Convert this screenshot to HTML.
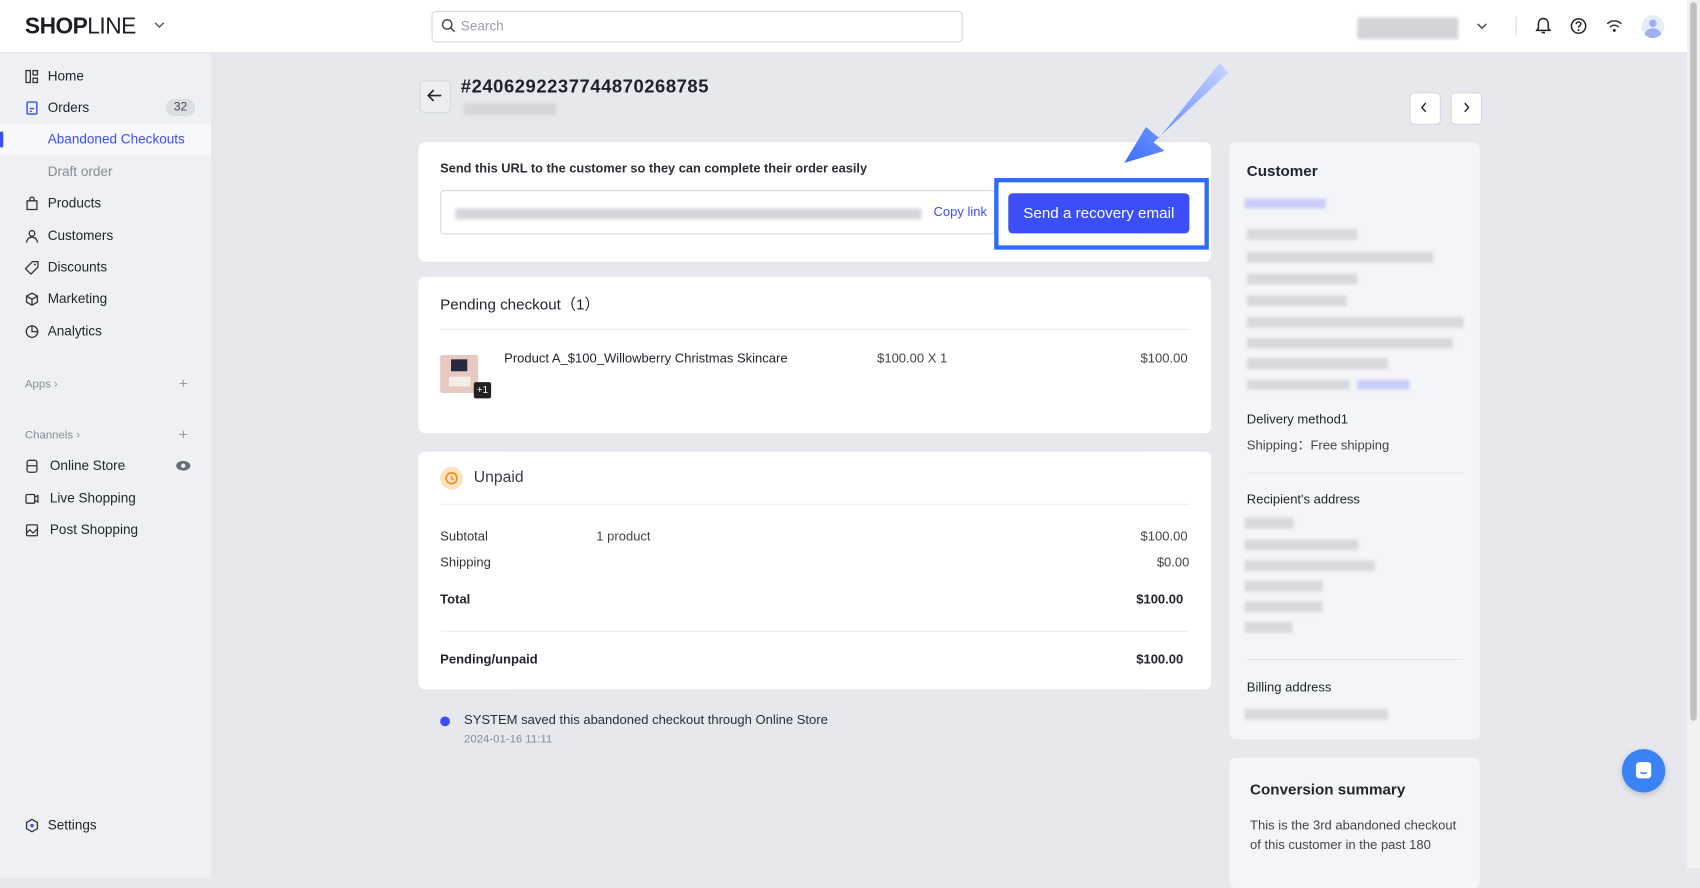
<!DOCTYPE html>
<html><head><meta charset="utf-8">
<style>
html,body{margin:0;padding:0;width:1700px;height:850px;overflow:hidden;background:#e6e8ee;}
#w{position:absolute;left:0;top:0;width:1568px;height:800px;transform:scale(1.08418,1.0856);transform-origin:0 0;font-family:"Liberation Sans",Arial,sans-serif;color:#23252e;background:#e6e8ee;}
.a{position:absolute;}
.t{position:absolute;white-space:nowrap;line-height:1;}
.card{position:absolute;background:#fff;border-radius:6px;}
.blur{position:absolute;background:#d7d8de;filter:blur(1.5px);}
.nav{position:absolute;left:44px;font-size:12.5px;color:#23252e;}
.ic{position:absolute;left:23px;width:13px;height:13px;}
</style></head><body><div id="w">
<div class="a" style="left:0;top:0;width:1556px;height:48px;background:#fff;border-bottom:1px solid #e3e4ea;"></div>
<div class="t" style="left:23px;top:14px;font-size:21px;font-weight:bold;letter-spacing:-0.5px;color:#1d1f27;">SHOP<span style="font-weight:normal">LINE</span></div>
<svg class="a" style="left:142px;top:19px" width="10" height="8"><path d="M1 2l4 4 4-4" stroke="#555" fill="none" stroke-width="1.3"/></svg>
<div class="a" style="left:398px;top:10px;width:488px;height:27px;border:1px solid #d3d5dc;border-radius:4px;background:#fff;"></div>
<svg class="a" style="left:407px;top:17px" width="13" height="13"><circle cx="5.5" cy="5.5" r="4.3" stroke="#444" fill="none" stroke-width="1.3"/><path d="M8.7 8.7l3.5 3.5" stroke="#444" stroke-width="1.4"/></svg>
<div class="t" style="left:425px;top:18px;font-size:12.5px;color:#9a9ca6;">Search</div>
<div class="blur" style="left:1252px;top:16px;width:93px;height:20px;background:#d2d3d8;"></div>
<svg class="a" style="left:1362px;top:20px" width="10" height="8"><path d="M1 2l4 4 4-4" stroke="#444" fill="none" stroke-width="1.3"/></svg>
<div class="a" style="left:1398px;top:15px;width:1px;height:18px;background:#dcdde2;"></div>
<svg class="a" style="left:1416px;top:15px" width="15" height="17"><path d="M7.5 2c-3 0-4.5 2.3-4.5 5v4L1.5 13h12L12 11V7c0-2.7-1.5-5-4.5-5zM6 15h3" stroke="#222" fill="none" stroke-width="1.4"/></svg>
<svg class="a" style="left:1448px;top:16px" width="16" height="16"><circle cx="8" cy="8" r="6.6" stroke="#222" fill="none" stroke-width="1.4"/><path d="M5.8 6.2c0-1.3 1-2 2.2-2s2.2.8 2.2 1.9c0 1.5-2.2 1.6-2.2 3.3" stroke="#222" fill="none" stroke-width="1.3"/><circle cx="8" cy="11.7" r=".9" fill="#222"/></svg>
<svg class="a" style="left:1481px;top:17px" width="16" height="14"><path d="M1.5 5a9 9 0 0 1 13 0M4 8a5.5 5.5 0 0 1 8 0" stroke="#333" fill="none" stroke-width="1.4"/><circle cx="8" cy="11" r="1.4" fill="#333"/></svg>
<div class="a" style="left:1514px;top:14px;width:21px;height:21px;border-radius:50%;background:#e6ebfb;overflow:hidden;"><div class="a" style="left:7px;top:4px;width:7px;height:7px;border-radius:50%;background:#9fb0f5;"></div><div class="a" style="left:3px;top:12px;width:15px;height:12px;border-radius:50%;background:#9fb0f5;"></div></div>
<div class="a" style="left:1556px;top:0;width:12px;height:800px;background:#f1f1f1;"></div>
<div class="a" style="left:1559px;top:2px;width:6px;height:662px;border-radius:3px;background:#c1c1c1;"></div>
<div class="a" style="left:0;top:49px;width:195px;height:760px;background:#eef0f4;border-right:1px solid #e0e2e8;"></div>
<div class="a" style="left:0;top:114px;width:195px;height:29px;background:#f7f8fb;"></div>
<div class="a" style="left:0;top:121px;width:3px;height:15px;background:#3b4ef8;border-radius:2px;"></div>
<svg class="ic" style="top:64px" viewBox="0 0 13 13"><rect x="1" y="1" width="4" height="11" stroke="#333" fill="none" stroke-width="1.2"/><rect x="7.5" y="1" width="4" height="4" stroke="#333" fill="none" stroke-width="1.2"/><rect x="7.5" y="8" width="4" height="4" stroke="#333" fill="none" stroke-width="1.2"/></svg>
<div class="t nav" style="top:64px">Home</div>
<svg class="ic" style="top:93px" viewBox="0 0 13 13"><rect x="2" y="1" width="9" height="11" rx="1" stroke="#3b4ef8" fill="none" stroke-width="1.3"/><path d="M4.5 7h4M4.5 9.5h2" stroke="#3b4ef8" stroke-width="1.2"/></svg>
<div class="t nav" style="top:93px">Orders</div>
<div class="a" style="left:153px;top:91px;width:27px;height:16px;border-radius:8px;background:#dcdee6;font-size:11px;line-height:16px;text-align:center;color:#444;">32</div>
<div class="t nav" style="top:122px;color:#3b4ef8">Abandoned Checkouts</div>
<div class="t nav" style="top:152px;color:#8a8c96">Draft order</div>
<svg class="ic" style="top:181px" viewBox="0 0 13 13"><path d="M2 4h9v8H2zM4.5 4V2.5a2 2 0 0 1 4 0V4" stroke="#333" fill="none" stroke-width="1.2"/></svg>
<div class="t nav" style="top:181px">Products</div>
<svg class="ic" style="top:211px" viewBox="0 0 13 13"><circle cx="6.5" cy="4" r="2.6" stroke="#333" fill="none" stroke-width="1.2"/><path d="M1.5 12.5a5 5 0 0 1 10 0" stroke="#333" fill="none" stroke-width="1.2"/></svg>
<div class="t nav" style="top:211px">Customers</div>
<svg class="ic" style="top:240px" viewBox="0 0 13 13"><path d="M7 1h5v5l-6.5 6.5-5-5z" stroke="#333" fill="none" stroke-width="1.2"/><circle cx="9.3" cy="3.7" r=".9" fill="#333"/></svg>
<div class="t nav" style="top:240px">Discounts</div>
<svg class="ic" style="top:269px" viewBox="0 0 13 13"><path d="M6.5 1l5 2.8v5.5l-5 2.8-5-2.8V3.8zM1.5 3.8l5 2.8 5-2.8M6.5 6.6v5.5" stroke="#333" fill="none" stroke-width="1.2"/></svg>
<div class="t nav" style="top:269px">Marketing</div>
<svg class="ic" style="top:299px" viewBox="0 0 13 13"><circle cx="6.5" cy="6.5" r="5.3" stroke="#333" fill="none" stroke-width="1.2"/><path d="M6.5 1.2v5.3h5.3" stroke="#333" fill="none" stroke-width="1.2"/></svg>
<div class="t nav" style="top:299px">Analytics</div>
<div class="t" style="left:23px;top:349px;font-size:10.5px;color:#8a8c96;">Apps ›</div>
<div class="t" style="left:165px;top:346px;font-size:14px;color:#999;">+</div>
<div class="t" style="left:23px;top:396px;font-size:10.5px;color:#8a8c96;">Channels ›</div>
<div class="t" style="left:165px;top:393px;font-size:14px;color:#999;">+</div>
<svg class="ic" style="top:423px" viewBox="0 0 13 13"><rect x="2" y="1" width="9" height="11" rx="2" stroke="#333" fill="none" stroke-width="1.2"/><path d="M2 6h9" stroke="#333" stroke-width="1.2"/></svg>
<div class="t nav" style="top:423px;left:46px">Online Store</div>
<svg class="a" style="left:162px;top:423px" width="14" height="12"><ellipse cx="7" cy="6" rx="6.5" ry="4.5" fill="#6a6d78"/><circle cx="7" cy="6" r="2" fill="#eef0f4"/></svg>
<svg class="ic" style="top:453px" viewBox="0 0 13 13"><rect x="1" y="2.5" width="8" height="8" rx="1" stroke="#333" fill="none" stroke-width="1.2"/><path d="M9 5l3-1.5v6L9 8" stroke="#333" fill="none" stroke-width="1.2"/></svg>
<div class="t nav" style="top:453px;left:46px">Live Shopping</div>
<svg class="ic" style="top:482px" viewBox="0 0 13 13"><rect x="1.5" y="1.5" width="10" height="10" rx="1" stroke="#333" fill="none" stroke-width="1.2"/><path d="M1.5 9l3-3 3 3 4-4" stroke="#333" fill="none" stroke-width="1.1"/></svg>
<div class="t nav" style="top:482px;left:46px">Post Shopping</div>
<svg class="ic" style="top:754px" viewBox="0 0 13 13"><path d="M6.5 .8l5 2.9v5.6l-5 2.9-5-2.9V3.7z" stroke="#333" fill="none" stroke-width="1.2"/><circle cx="6.5" cy="6.5" r="1.6" fill="#3b4ef8"/></svg>
<div class="t nav" style="top:754px">Settings</div>
<div class="a" style="left:387px;top:74px;width:27px;height:28px;border:1px solid #d5d7de;border-radius:4px;background:#eceef2;"></div>
<svg class="a" style="left:393px;top:81px" width="16" height="14"><path d="M14 7H2M7 2L2 7l5 5" stroke="#222" fill="none" stroke-width="1.5"/></svg>
<div class="t" style="left:425px;top:71px;font-size:17px;font-weight:bold;letter-spacing:0.5px;color:#1f2129;">#2406292237744870268785</div>
<div class="blur" style="left:428px;top:95px;width:85px;height:11px;background:#d4d5da;"></div>
<div class="a" style="left:1300px;top:85px;width:27px;height:28px;border:1px solid #d5d7de;border-radius:4px;background:#fff;"></div>
<div class="a" style="left:1338px;top:85px;width:27px;height:28px;border:1px solid #d5d7de;border-radius:4px;background:#fff;"></div>
<svg class="a" style="left:1309px;top:93px" width="10" height="12"><path d="M6 2L2.5 6 6 10" stroke="#222" fill="none" stroke-width="1.3"/></svg>
<svg class="a" style="left:1347px;top:93px" width="10" height="12"><path d="M4 2l3.5 4L4 10" stroke="#222" fill="none" stroke-width="1.3"/></svg>
<div class="card" style="left:386px;top:131px;width:731px;height:110px;"></div>
<div class="t" style="left:406px;top:150px;font-size:11.8px;font-weight:bold;color:#2b2d35;">Send this URL to the customer so they can complete their order easily</div>
<div class="a" style="left:406px;top:175px;width:510px;height:39px;border:1px solid #d5d7de;border-radius:4px;background:#fff;"></div>
<div class="blur" style="left:420px;top:192px;width:430px;height:10px;background:#d5d6db;"></div>
<div class="t" style="left:861px;top:189px;font-size:12px;color:#3b4ef8;">Copy link</div>
<div class="a" style="left:917px;top:164px;width:190px;height:58px;border:4px solid #2f6bff;"></div>
<div class="a" style="left:930px;top:178px;width:167px;height:37px;background:#3b4ef8;border-radius:4px;color:#fff;font-size:14px;line-height:37px;text-align:center;">Send a recovery email</div>
<svg class="a" style="left:1030px;top:55px" width="110" height="105"><defs><linearGradient id="g" x1="1" y1="0" x2="0" y2="1"><stop offset="0" stop-color="#c7d6ff"/><stop offset="1" stop-color="#3a6cff"/></linearGradient></defs><path d="M103 12L95 3 39 72 27 62 7 95 44 84 34 76z" fill="url(#g)"/></svg>
<div class="card" style="left:386px;top:255px;width:731px;height:144px;"></div>
<div class="t" style="left:406px;top:273px;font-size:14px;color:#23252e;">Pending checkout（1）</div>
<div class="a" style="left:406px;top:303px;width:691px;height:1px;background:#eceef2;"></div>
<div class="a" style="left:406px;top:327px;width:35px;height:35px;background:#e8c8bf;border-radius:2px;overflow:hidden;"><div class="a" style="left:10px;top:4px;width:15px;height:11px;background:#2a2740;"></div><div class="a" style="left:8px;top:20px;width:20px;height:9px;background:#f5ebe7;"></div></div>
<div class="a" style="left:437px;top:352px;width:16px;height:15px;background:#222;border-radius:2px;color:#fff;font-size:9px;line-height:15px;text-align:center;">+1</div>
<div class="t" style="left:465px;top:324px;font-size:12px;color:#23252e;">Product A_$100_Willowberry Christmas Skincare</div>
<div class="t" style="left:809px;top:324px;font-size:12px;color:#444;">$100.00 X 1</div>
<div class="t" style="left:1052px;top:324px;font-size:12px;color:#444;">$100.00</div>
<div class="card" style="left:386px;top:416px;width:731px;height:219px;"></div>
<div class="a" style="left:406px;top:430px;width:21px;height:21px;border-radius:50%;background:#fde3bf;"></div>
<svg class="a" style="left:409px;top:433px" width="15" height="15"><circle cx="7.5" cy="7.5" r="5" stroke="#f08c1c" fill="none" stroke-width="1.5"/><path d="M7.5 5v3l2 1" stroke="#f08c1c" fill="none" stroke-width="1.3"/></svg>
<div class="t" style="left:437px;top:433px;font-size:14.5px;color:#3a3c45;">Unpaid</div>
<div class="a" style="left:406px;top:464px;width:691px;height:1px;background:#eceef2;"></div>
<div class="t" style="left:406px;top:488px;font-size:12px;color:#333;">Subtotal</div>
<div class="t" style="left:550px;top:488px;font-size:12px;color:#444;">1 product</div>
<div class="t" style="left:1052px;top:488px;font-size:12px;color:#444;">$100.00</div>
<div class="t" style="left:406px;top:512px;font-size:12px;color:#333;">Shipping</div>
<div class="t" style="left:1067px;top:512px;font-size:12px;color:#444;">$0.00</div>
<div class="t" style="left:406px;top:546px;font-size:12px;font-weight:bold;">Total</div>
<div class="t" style="left:1048px;top:546px;font-size:12px;font-weight:bold;">$100.00</div>
<div class="a" style="left:406px;top:581px;width:691px;height:1px;background:#eceef2;"></div>
<div class="t" style="left:406px;top:601px;font-size:12px;font-weight:bold;">Pending/unpaid</div>
<div class="t" style="left:1048px;top:601px;font-size:12px;font-weight:bold;">$100.00</div>
<div class="a" style="left:406px;top:660px;width:9px;height:9px;border-radius:50%;background:#3b4ef8;"></div>
<div class="t" style="left:428px;top:657px;font-size:12px;color:#2b2d35;">SYSTEM saved this abandoned checkout through Online Store</div>
<div class="t" style="left:428px;top:676px;font-size:10.5px;color:#8a8c96;">2024-01-16 11:11</div>
<div class="card" style="left:1134px;top:131px;width:231px;height:550px;background:#f4f5f9;"></div>
<div class="t" style="left:1150px;top:150px;font-size:14px;font-weight:bold;color:#23252e;">Customer</div>
<div class="blur" style="left:1148px;top:183px;width:75px;height:9px;background:#c9cdf7;"></div>
<div class="blur" style="left:1150px;top:211px;width:102px;height:10px;"></div>
<div class="blur" style="left:1150px;top:232px;width:172px;height:10px;"></div>
<div class="blur" style="left:1150px;top:252px;width:102px;height:10px;"></div>
<div class="blur" style="left:1150px;top:272px;width:92px;height:10px;"></div>
<div class="blur" style="left:1150px;top:292px;width:200px;height:10px;"></div>
<div class="blur" style="left:1150px;top:311px;width:190px;height:10px;"></div>
<div class="blur" style="left:1150px;top:330px;width:130px;height:10px;"></div>
<div class="blur" style="left:1150px;top:350px;width:95px;height:9px;"></div>
<div class="blur" style="left:1252px;top:350px;width:48px;height:9px;background:#c9cdf7;"></div>
<div class="t" style="left:1150px;top:380px;font-size:12px;color:#23252e;">Delivery method1</div>
<div class="t" style="left:1150px;top:404px;font-size:12px;color:#444;">Shipping：Free shipping</div>
<div class="a" style="left:1150px;top:435px;width:200px;height:1px;background:#e4e6eb;"></div>
<div class="t" style="left:1150px;top:454px;font-size:12px;color:#23252e;">Recipient's address</div>
<div class="blur" style="left:1148px;top:477px;width:45px;height:10px;"></div>
<div class="blur" style="left:1148px;top:497px;width:105px;height:10px;"></div>
<div class="blur" style="left:1148px;top:516px;width:120px;height:10px;"></div>
<div class="blur" style="left:1148px;top:535px;width:72px;height:10px;"></div>
<div class="blur" style="left:1148px;top:554px;width:72px;height:10px;"></div>
<div class="blur" style="left:1148px;top:573px;width:44px;height:10px;"></div>
<div class="a" style="left:1150px;top:607px;width:200px;height:1px;background:#e4e6eb;"></div>
<div class="t" style="left:1150px;top:627px;font-size:12px;color:#23252e;">Billing address</div>
<div class="blur" style="left:1148px;top:653px;width:132px;height:10px;"></div>
<div class="card" style="left:1134px;top:698px;width:231px;height:120px;background:#f4f5f9;"></div>
<div class="t" style="left:1153px;top:720px;font-size:14px;font-weight:bold;color:#23252e;">Conversion summary</div>
<div class="t" style="left:1153px;top:754px;font-size:12px;color:#444;">This is the 3rd abandoned checkout</div>
<div class="t" style="left:1153px;top:772px;font-size:12px;color:#444;">of this customer in the past 180</div>
<div class="a" style="left:1496px;top:690px;width:40px;height:40px;border-radius:50%;background:#3b82f6;box-shadow:0 2px 6px rgba(0,0,0,.2);"></div>
<svg class="a" style="left:1506px;top:700px" width="20" height="20"><rect x="3" y="2" width="14" height="15" rx="3" fill="#fff"/><path d="M7 11.5c1.7 1.3 4.3 1.3 6 0" stroke="#3b82f6" fill="none" stroke-width="1.4"/></svg>
</div></body></html>
